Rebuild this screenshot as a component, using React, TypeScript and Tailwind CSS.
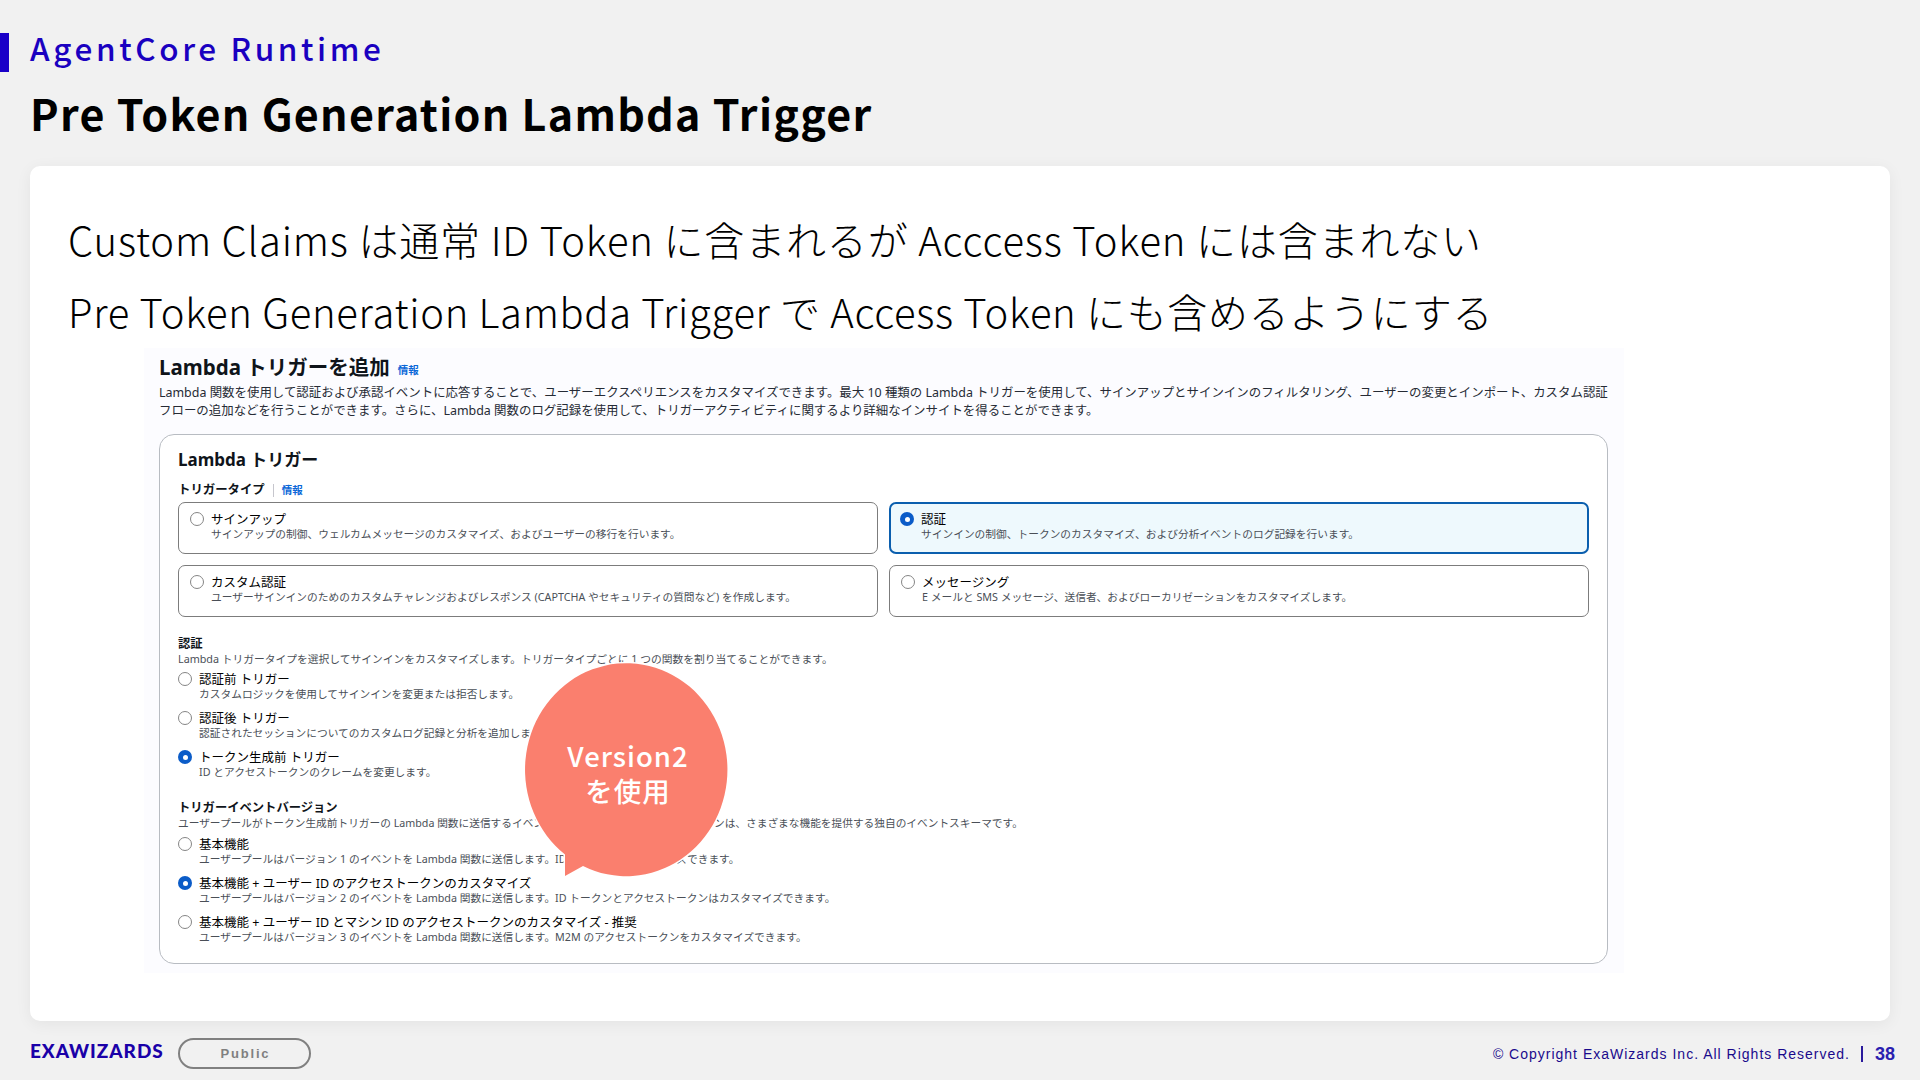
import clsx from "clsx";

type Item = {
  title: string;
  text: string;
  checked?: boolean;
};

const tiles: Item[] = [
  {
    title: "サインアップ",
    text: "サインアップの制御、ウェルカムメッセージのカスタマイズ、およびユーザーの移行を行います。",
  },
  {
    title: "認証",
    text: "サインインの制御、トークンのカスタマイズ、および分析イベントのログ記録を行います。",
    checked: true,
  },
  {
    title: "カスタム認証",
    text: "ユーザーサインインのためのカスタムチャレンジおよびレスポンス (CAPTCHA やセキュリティの質問など) を作成します。",
  },
  {
    title: "メッセージング",
    text: "E メールと SMS メッセージ、送信者、およびローカリゼーションをカスタマイズします。",
  },
];

const authTriggers: Item[] = [
  {
    title: "認証前 トリガー",
    text: "カスタムロジックを使用してサインインを変更または拒否します。",
  },
  {
    title: "認証後 トリガー",
    text: "認証されたセッションについてのカスタムログ記録と分析を追加します。",
  },
  {
    title: "トークン生成前 トリガー",
    text: "ID とアクセストークンのクレームを変更します。",
    checked: true,
  },
];

const eventVersions: Item[] = [
  {
    title: "基本機能",
    text: "ユーザープールはバージョン 1 のイベントを Lambda 関数に送信します。ID トークンはカスタマイズできます。",
  },
  {
    title: "基本機能 + ユーザー ID のアクセストークンのカスタマイズ",
    text: "ユーザープールはバージョン 2 のイベントを Lambda 関数に送信します。ID トークンとアクセストークンはカスタマイズできます。",
    checked: true,
  },
  {
    title: "基本機能 + ユーザー ID とマシン ID のアクセストークンのカスタマイズ - 推奨",
    text: "ユーザープールはバージョン 3 のイベントを Lambda 関数に送信します。M2M のアクセストークンをカスタマイズできます。",
  },
];

const Radio = ({ checked = false }: { checked?: boolean }) => (
  <span
    className={clsx(
      "flex size-3.5 shrink-0 items-center justify-center rounded-full",
      checked ? "bg-[#0b5cc8]" : "border border-[#858585] bg-white",
    )}
  >
    {checked && <span className="size-[5px] rounded-full bg-white" />}
  </span>
);

const Choice = ({ item }: { item: Item }) => (
  <div className="flex h-[31px] gap-[7px] whitespace-nowrap">
    <div className="flex h-4 items-center">
      <Radio checked={item.checked} />
    </div>
    <div>
      <div className="h-4 text-[12.5px] leading-[17px] text-black">
        {item.title}
      </div>
      <div className="text-[10.73px] leading-[15px] text-[#4a4f57]">
        {item.text}
      </div>
    </div>
  </div>
);

const RadioList = ({ items }: { items: Item[] }) => (
  <div className="flex flex-col gap-2">
    {items.map((item) => (
      <Choice key={item.title} item={item} />
    ))}
  </div>
);

const Bubble = () => (
  <div className="absolute top-[315px] left-[381px] h-[213px] w-[202px]">
    <svg
      className="absolute inset-0 overflow-visible"
      width="202"
      height="213"
      viewBox="0 0 202 213"
    >
      <path
        d="M40 213V191.500A101.200 106.500 0 1 1 58 203Z"
        fill="#fa7f6e"
        stroke="#fff"
        strokeWidth="3"
        paintOrder="stroke"
      />
    </svg>
    <div className="relative pt-[75px] pl-1 text-center font-['Noto_Sans_CJK_JP',sans-serif] text-[27.5px] leading-[35px] font-medium tracking-[1px] text-white">
      <div>Version2</div>
      <div>を使用</div>
    </div>
  </div>
);

const TriggerForm = () => (
  <section className="relative ml-[114px] h-[625px] w-[1480px] bg-[#fcfcff] px-[15px] pt-1 font-['Noto_Sans','Noto_Sans_CJK_JP',sans-serif] whitespace-nowrap text-[#0f141a]">
    <div className="flex h-8 items-center gap-2">
      <h3 className="pb-0.5 text-[20.5px] font-bold">Lambda トリガーを追加</h3>
      <span className="pt-1.5 text-[10.5px] font-bold text-[#0b68d8]">
        情報
      </span>
    </div>
    <p className="text-[12.45px] leading-[17.5px] text-[#262b35]">
      Lambda
      関数を使用して認証および承認イベントに応答することで、ユーザーエクスペリエンスをカスタマイズできます。最大
      10 種類の Lambda
      トリガーを使用して、サインアップとサインインのフィルタリング、ユーザーの変更とインポート、カスタム認証
      <br />
      フローの追加などを行うことができます。さらに、Lambda
      関数のログ記録を使用して、トリガーアクティビティに関するより詳細なインサイトを得ることができます。
    </p>
    <div className="mt-[15px] h-[530px] w-[1449px] rounded-[15px] border border-[#b8bcc2] bg-white px-[18px] pt-[13px]">
      <h4 className="h-6 text-[17px] leading-6 font-bold">Lambda トリガー</h4>
      <div className="mt-2.5 flex h-4 items-center text-[12.4px] leading-4 font-bold">
        <span>トリガータイプ</span>
        <span className="mx-2 h-[13px] w-px bg-[#c6c6cd]" />
        <span className="text-[10.5px] text-[#0b68d8]">情報</span>
      </div>
      <div className="mt-1 grid grid-cols-[700px_700px] gap-x-[11px] gap-y-[11px]">
        {tiles.map((tile) => (
          <div
            key={tile.title}
            className={clsx(
              "h-[52px] rounded-[7px]",
              tile.checked
                ? "border-2 border-[#0b5fae] bg-[#eef9fd] pt-[7px] pl-[9px]"
                : "border border-[#7c7c7c] pt-2 pl-[11px]",
            )}
          >
            <Choice item={tile} />
          </div>
        ))}
      </div>
      <h5 className="mt-[19px] h-4 text-[12.3px] leading-4 font-bold">認証</h5>
      <p className="mb-1 h-[15px] text-[10.75px] leading-[15px] text-[#4a4f57]">
        Lambda
        トリガータイプを選択してサインインをカスタマイズします。トリガータイプごとに
        1 つの関数を割り当てることができます。
      </p>
      <RadioList items={authTriggers} />
      <h5 className="mt-5 h-4 text-[12.3px] leading-4 font-bold">
        トリガーイベントバージョン
      </h5>
      <p className="mb-1 h-4 text-[10.69px] leading-[15px] text-[#4a4f57]">
        ユーザープールがトークン生成前トリガーの Lambda
        関数に送信するイベントのバージョン。イベントバージョンは、さまざまな機能を提供する独自のイベントスキーマです。
      </p>
      <RadioList items={eventVersions} />
    </div>
    <Bubble />
  </section>
);

export default function App() {
  return (
    <div className="flex h-[1080px] w-[1920px] flex-col overflow-hidden bg-[#f1f1f1] font-['Noto_Sans_CJK_JP',sans-serif]">
      <header className="h-[166px] shrink-0 pt-[33px]">
        <div className="flex h-[39px]">
          <div className="h-full w-[9px] bg-[#1a00c8]" />
          <h2 className="pl-[21px] text-[31.5px] leading-[29px] font-medium tracking-[3.6px] text-[#1a00c0]">
            AgentCore Runtime
          </h2>
        </div>
        <h1 className="mt-2.5 pl-[30px] text-[43px] leading-[60px] font-bold tracking-[1.28px] text-black">
          Pre Token Generation Lambda Trigger
        </h1>
      </header>

      <main className="mx-[30px] h-[855px] shrink-0 rounded-[10px] bg-white shadow-[0_3px_16px_rgba(0,0,0,0.06)]">
        <div className="h-[182px] pt-[37px] pl-[38px] text-[40px] leading-[72px] font-light whitespace-nowrap text-black">
          <p className="tracking-[0.84px]">
            Custom Claims は通常 ID Token に含まれるが Acccess Token
            には含まれない
          </p>
          <p className="tracking-[0.67px]">
            Pre Token Generation Lambda Trigger で Access Token
            にも含めるようにする
          </p>
        </div>
        <TriggerForm />
      </main>

      <footer className="flex h-[59px] items-center justify-between pt-[5px] pr-[25px] pl-[30px]">
        <div className="flex items-center">
          <span className="w-[148px] pb-1 font-['Lato',sans-serif] text-[19px] font-black tracking-[0.95px] text-[#1a00a8]">
            EXAWIZARDS
          </span>
          <span className="flex h-[31px] w-[133px] items-center justify-center rounded-full border-2 border-[#808080] pt-0.5 pl-0.5 font-['Liberation_Sans',sans-serif] text-[13px] font-bold tracking-[1.8px] text-[#808080]">
            Public
          </span>
        </div>
        <div className="flex items-center pt-0.5 font-['Liberation_Sans',sans-serif] text-[14px] text-[#1a0a8c]">
          <span className="tracking-[1px]">
            © Copyright ExaWizards Inc. All Rights Reserved.
          </span>
          <span className="mr-3 ml-[11px] h-4 w-0.5 bg-[#2a1a9c]" />
          <span className="text-[18px] leading-5 font-bold text-[#2a20b0]">
            38
          </span>
        </div>
      </footer>
    </div>
  );
}
